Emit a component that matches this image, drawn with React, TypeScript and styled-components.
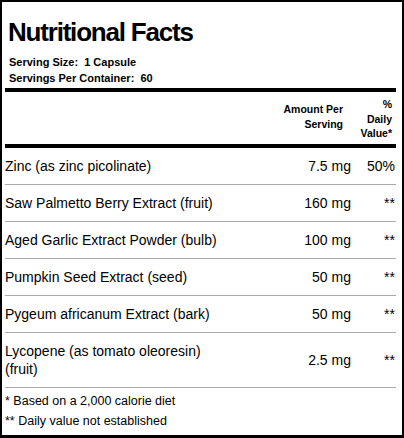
import React from "react";
import styled, { createGlobalStyle } from "styled-components";

const Global = createGlobalStyle`
  html, body { margin: 0; padding: 0; background: #fff; }
  body { font-family: "Liberation Sans", Arial, sans-serif; color: #000; }
  * { box-sizing: border-box; }
`;

const Panel = styled.div`
  width: 404px;
  height: 438px;
  border: 2px solid #000;
  border-bottom-width: 3px;
  padding: 0 6px 0 3px;
  display: flex;
  flex-direction: column;
`;

const Title = styled.h1`
  margin: 15px 0 0 3px;
  font-size: 26px;
  line-height: 30px;
  font-weight: 700;
  letter-spacing: -1.2px;
`;

const ServingInfo = styled.div`
  margin: 7px 0 2px 4px;
  font-size: 11px;
  line-height: 16px;
  font-weight: 700;
  white-space: pre;
`;

const Bar = styled.div`
  height: 4px;
  background: #000;
`;

const Grid = styled.div`
  display: grid;
  grid-template-columns: 225px 1fr 45px;
`;

const HeadRow = styled(Grid)`
  height: 52px;
  padding-top: 5px;
  font-size: 10.5px;
  line-height: 14.5px;
  font-weight: 700;
`;

const HeadCell = styled.div<{ $col: number; $pr: number; $top: number }>`
  grid-column: ${(p) => p.$col};
  text-align: right;
  padding-right: ${(p) => p.$pr}px;
  padding-top: ${(p) => p.$top}px;
`;

const Row = styled(Grid)`
  border-bottom: 1px solid #aaa;
  font-size: 14px;
  line-height: 18px;
  padding: 9px 0;
  align-items: center;
`;

const Name = styled.div``;

const Amount = styled.div`
  text-align: right;
`;

const Daily = styled.div`
  text-align: right;
  padding-right: 1px;
`;

const Foot = styled.div`
  font-size: 12.5px;
  line-height: 20px;
  margin-top: 3px;
`;

const rows: [string, string, string][] = [
  ["Zinc (as zinc picolinate)", "7.5 mg", "50%"],
  ["Saw Palmetto Berry Extract (fruit)", "160 mg", "**"],
  ["Aged Garlic Extract Powder (bulb)", "100 mg", "**"],
  ["Pumpkin Seed Extract (seed)", "50 mg", "**"],
  ["Pygeum africanum Extract (bark)", "50 mg", "**"],
  ["Lycopene (as tomato oleoresin) (fruit)", "2.5 mg", "**"],
];

export default function App() {
  return (
    <>
      <Global />
      <Panel>
        <Title>Nutritional Facts</Title>
        <ServingInfo>
          {"Serving Size:  1 Capsule\nServings Per Container:  60"}
        </ServingInfo>
        <Bar />
        <HeadRow>
          <HeadCell $col={2} $pr={8} $top={5}>
            Amount Per
            <br />
            Serving
          </HeadCell>
          <HeadCell $col={3} $pr={4} $top={0}>
            %
            <br />
            Daily
            <br />
            Value*
          </HeadCell>
        </HeadRow>
        <Bar />
        {rows.map(([n, a, d]) => (
          <Row key={n}>
            <Name>{n}</Name>
            <Amount>{a}</Amount>
            <Daily>{d}</Daily>
          </Row>
        ))}
        <Foot>
          * Based on a 2,000 calorie diet
          <br />
          ** Daily value not established
        </Foot>
      </Panel>
    </>
  );
}
